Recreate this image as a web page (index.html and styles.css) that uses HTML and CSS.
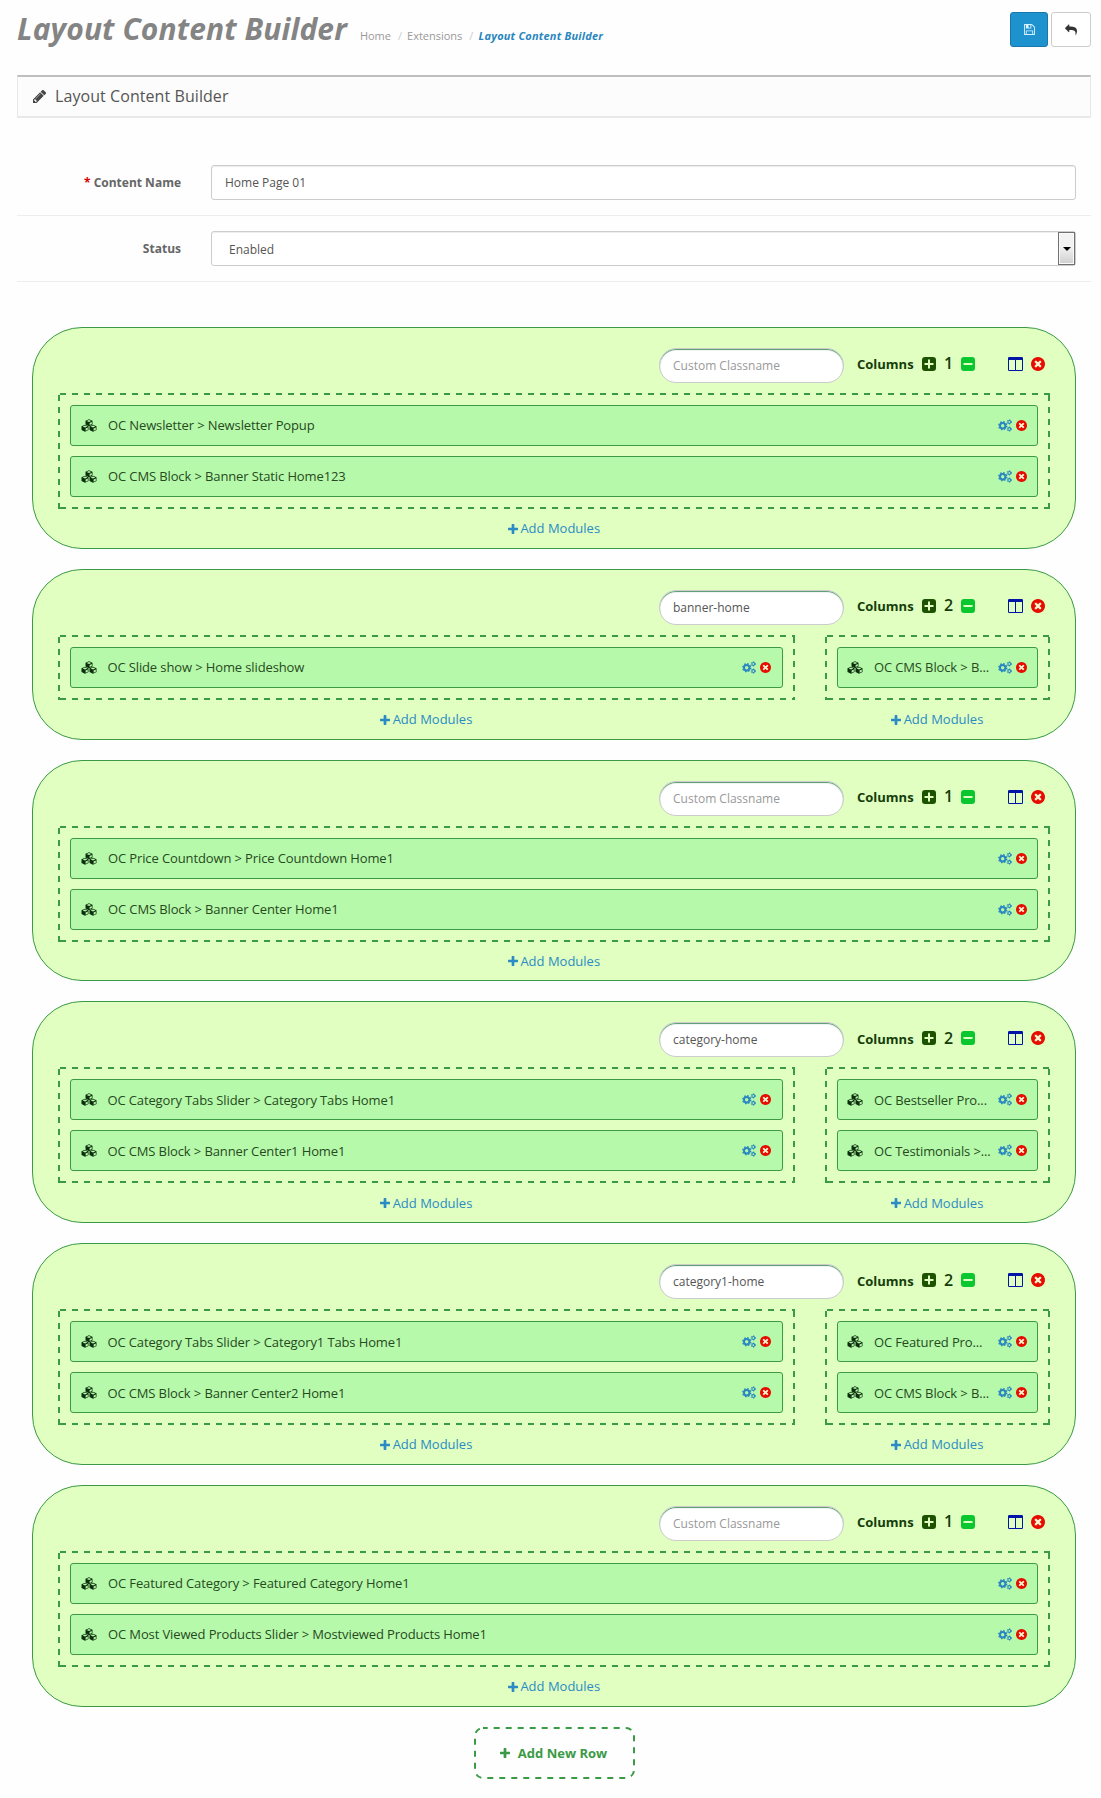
FILE: index.html
```
<!DOCTYPE html>
<html lang="en">
<head>
<meta charset="utf-8">
<title>Layout Content Builder</title>
<link rel="stylesheet" href="styles.css">
</head>
<body>
<svg class="sprite" aria-hidden="true">
  <symbol id="plus" viewBox="192 128 1408 1408"><path d="M1600 736v192q0 40-28 68t-68 28h-416v416q0 40-28 68t-68 28h-192q-40 0-68-28t-28-68v-416h-416q-40 0-68-28t-28-68v-192q0-40 28-68t68-28h416v-416q0-40 28-68t68-28h192q40 0 68 28t28 68v416h416q40 0 68 28t28 68z"/></symbol>
  <symbol id="reply" viewBox="0 0 1792 1792"><path d="M1792 1120q0 166-127 451-3 7-10.5 24t-13.5 30-13 22q-12 17-28 17-15 0-23.5-10t-8.5-25q0-9 2.5-26.5t2.5-23.5q5-68 5-123 0-101-17.5-181t-48.5-138.5-80-101-105.5-69.5-133-42.5-154-21.5-175.5-6h-224v256q0 26-19 45t-45 19-45-19l-512-512q-19-19-19-45t19-45l512-512q19-19 45-19t45 19 19 45v256h224q713 0 875 403 53 134 53 333z"/></symbol>
  <symbol id="save" viewBox="128 128 1536 1536"><path d="M512 1536h768v-384h-768v384zm896 0h128v-896q0-14-10-38.5t-20-34.5l-281-281q-10-10-34-20t-39-10v416q0 40-28 68t-68 28h-576q-40 0-68-28t-28-68v-416h-128v1280h128v-416q0-40 28-68t68-28h832q40 0 68 28t28 68v416zm-384-928v-320q0-13-9.5-22.5t-22.5-9.5h-192q-13 0-22.5 9.5t-9.5 22.5v320q0 13 9.5 22.5t22.5 9.5h192q13 0 22.5-9.5t9.5-22.5zm640 32v928q0 40-28 68t-68 28h-1344q-40 0-68-28t-28-68v-1344q0-40 28-68t68-28h928q40 0 88 20t76 48l280 280q28 28 48 76t20 88z"/></symbol>
  <symbol id="pencil" viewBox="128 149 1515 1515"><path d="M491 1536l91-91-235-235-91 91v107h128v128h107zm523-928q0-22-22-22-10 0-17 7l-542 542q-7 7-7 17 0 22 22 22 10 0 17-7l542-542q7-7 7-17zm-54-192l416 416-832 832h-416v-416zm683 96q0 53-37 90l-166 166-416-416 166-165q36-38 90-38 53 0 91 38l235 234q37 39 37 91z"/></symbol>
  <symbol id="remove" viewBox="128 128 1536 1536"><circle cx="896" cy="896" r="620" class="cross-bg"/><path d="M1277 1122q0-26-19-45l-181-181 181-181q19-19 19-45 0-27-19-46l-90-90q-19-19-46-19-26 0-45 19l-181 181-181-181q-19-19-45-19-27 0-46 19l-90 90q-19 19-19 46 0 26 19 45l181 181-181 181q-19 19-19 45 0 27 19 46l90 90q19 19 46 19 26 0 45-19l181-181 181 181q19 19 45 19 27 0 46-19l90-90q19-19 19-46zm387-226q0 209-103 385.5t-279.5 279.5-385.5 103-385.5-103-279.5-279.5-103-385.5 103-385.5 279.5-279.5 385.5-103 385.5 103 279.5 279.5 103 385.5z"/></symbol>
  <symbol id="plus-sq" viewBox="0 0 14 14"><path fill-rule="evenodd" d="M3 0h8a3 3 0 0 1 3 3v8a3 3 0 0 1-3 3H3a3 3 0 0 1-3-3V3a3 3 0 0 1 3-3zM6 2.5V6H2.5v2H6v3.500h2V8h3.500V6H8V2.500z"/></symbol>
  <symbol id="minus-sq" viewBox="0 0 14 14"><path fill-rule="evenodd" d="M3 0h8a3 3 0 0 1 3 3v8a3 3 0 0 1-3 3H3a3 3 0 0 1-3-3V3a3 3 0 0 1 3-3zM2.500 6v2h9V6z"/></symbol>
  <symbol id="columns" viewBox="0 0 15 14"><path fill-rule="evenodd" d="M1.300 0h12.400A1.300 1.300 0 0 1 15 1.300v11.400a1.300 1.300 0 0 1-1.300 1.300H1.300A1.300 1.300 0 0 1 0 12.700V1.300A1.300 1.300 0 0 1 1.300 0zM1 3v10h6V3zM8 3v10h6V3z"/></symbol>
  <symbol id="cubes" viewBox="0 0 16 13"><g id="cube"><path d="M8 .2l3.500 1.500v3.800L8 7.200 4.500 5.500V1.700z"/><path class="facet" d="M8 1l2.300 1L8 3 5.700 2zM8.600 4l2.200-1v2.100l-2.200 1z"/></g><use href="#cube" x="-4" y="5.600"/><use href="#cube" x="4" y="5.600"/></symbol>
  <symbol id="cogs" viewBox="0 0 14 13"><g fill="none" stroke="currentColor"><circle cx="4.700" cy="6.700" r="2.700" stroke-width="2"/><circle cx="4.700" cy="6.700" r="4" stroke-width="1.300" stroke-dasharray="1.640 1.500"/><circle cx="11.300" cy="2.900" r="1.450" stroke-width="1.100"/><circle cx="11.300" cy="2.900" r="2.250" stroke-width=".9" stroke-dasharray="1 1.360"/><circle cx="11.300" cy="10.100" r="1.450" stroke-width="1.100"/><circle cx="11.300" cy="10.100" r="2.250" stroke-width=".9" stroke-dasharray="1 1.360"/></g></symbol>
</svg>

<header class="page-header">
  <h1>Layout Content Builder</h1>
  <ul class="breadcrumb"><li>Home</li><li>Extensions</li><li class="active">Layout Content Builder</li></ul>
  <div class="actions">
    <button class="btn btn-primary"><svg class="i-save"><use href="#save"/></svg></button>
    <button class="btn btn-default"><svg class="i-reply"><use href="#reply"/></svg></button>
  </div>
</header>

<div class="panel-heading"><svg class="i-pencil"><use href="#pencil"/></svg><h3>Layout Content Builder</h3></div>

<form class="settings">
  <div class="form-group"><label><span class="required">*</span> Content Name</label><div class="control">Home Page 01</div></div>
  <div class="form-group"><label>Status</label><div class="control select"><span>Enabled</span><i class="drop"></i></div></div>
</form>

<main class="rows">
  <section class="card">
    <div class="tools"><div class="classname empty">Custom Classname</div><b>Columns</b><svg class="i-plus"><use href="#plus-sq"/></svg><span class="count">1</span><svg class="i-minus"><use href="#minus-sq"/></svg><svg class="i-cols"><use href="#columns"/></svg><svg class="i-del"><use href="#remove"/></svg></div>
    <div class="cols">
      <div class="col"><div class="drop-zone">
        <div class="module"><svg class="i-cubes"><use href="#cubes"/></svg><span>OC Newsletter &gt; Newsletter Popup</span><svg class="i-cogs"><use href="#cogs"/></svg><svg class="i-x"><use href="#remove"/></svg></div>
        <div class="module"><svg class="i-cubes"><use href="#cubes"/></svg><span>OC CMS Block &gt; Banner Static Home123</span><svg class="i-cogs"><use href="#cogs"/></svg><svg class="i-x"><use href="#remove"/></svg></div>
      </div><a class="add"><svg><use href="#plus"/></svg>Add Modules</a></div>
    </div>
  </section>

  <section class="card">
    <div class="tools"><div class="classname">banner-home</div><b>Columns</b><svg class="i-plus"><use href="#plus-sq"/></svg><span class="count">2</span><svg class="i-minus"><use href="#minus-sq"/></svg><svg class="i-cols"><use href="#columns"/></svg><svg class="i-del"><use href="#remove"/></svg></div>
    <div class="cols split">
      <div class="col"><div class="drop-zone">
        <div class="module"><svg class="i-cubes"><use href="#cubes"/></svg><span>OC Slide show &gt; Home slideshow</span><svg class="i-cogs"><use href="#cogs"/></svg><svg class="i-x"><use href="#remove"/></svg></div>
      </div><a class="add"><svg><use href="#plus"/></svg>Add Modules</a></div>
      <div class="col"><div class="drop-zone">
        <div class="module"><svg class="i-cubes"><use href="#cubes"/></svg><span>OC CMS Block &gt; B...</span><svg class="i-cogs"><use href="#cogs"/></svg><svg class="i-x"><use href="#remove"/></svg></div>
      </div><a class="add"><svg><use href="#plus"/></svg>Add Modules</a></div>
    </div>
  </section>

  <section class="card">
    <div class="tools"><div class="classname empty">Custom Classname</div><b>Columns</b><svg class="i-plus"><use href="#plus-sq"/></svg><span class="count">1</span><svg class="i-minus"><use href="#minus-sq"/></svg><svg class="i-cols"><use href="#columns"/></svg><svg class="i-del"><use href="#remove"/></svg></div>
    <div class="cols">
      <div class="col"><div class="drop-zone">
        <div class="module"><svg class="i-cubes"><use href="#cubes"/></svg><span>OC Price Countdown &gt; Price Countdown Home1</span><svg class="i-cogs"><use href="#cogs"/></svg><svg class="i-x"><use href="#remove"/></svg></div>
        <div class="module"><svg class="i-cubes"><use href="#cubes"/></svg><span>OC CMS Block &gt; Banner Center Home1</span><svg class="i-cogs"><use href="#cogs"/></svg><svg class="i-x"><use href="#remove"/></svg></div>
      </div><a class="add"><svg><use href="#plus"/></svg>Add Modules</a></div>
    </div>
  </section>

  <section class="card">
    <div class="tools"><div class="classname">category-home</div><b>Columns</b><svg class="i-plus"><use href="#plus-sq"/></svg><span class="count">2</span><svg class="i-minus"><use href="#minus-sq"/></svg><svg class="i-cols"><use href="#columns"/></svg><svg class="i-del"><use href="#remove"/></svg></div>
    <div class="cols split">
      <div class="col"><div class="drop-zone">
        <div class="module"><svg class="i-cubes"><use href="#cubes"/></svg><span>OC Category Tabs Slider &gt; Category Tabs Home1</span><svg class="i-cogs"><use href="#cogs"/></svg><svg class="i-x"><use href="#remove"/></svg></div>
        <div class="module"><svg class="i-cubes"><use href="#cubes"/></svg><span>OC CMS Block &gt; Banner Center1 Home1</span><svg class="i-cogs"><use href="#cogs"/></svg><svg class="i-x"><use href="#remove"/></svg></div>
      </div><a class="add"><svg><use href="#plus"/></svg>Add Modules</a></div>
      <div class="col"><div class="drop-zone">
        <div class="module"><svg class="i-cubes"><use href="#cubes"/></svg><span>OC Bestseller Pro...</span><svg class="i-cogs"><use href="#cogs"/></svg><svg class="i-x"><use href="#remove"/></svg></div>
        <div class="module"><svg class="i-cubes"><use href="#cubes"/></svg><span>OC Testimonials &gt;...</span><svg class="i-cogs"><use href="#cogs"/></svg><svg class="i-x"><use href="#remove"/></svg></div>
      </div><a class="add"><svg><use href="#plus"/></svg>Add Modules</a></div>
    </div>
  </section>

  <section class="card">
    <div class="tools"><div class="classname">category1-home</div><b>Columns</b><svg class="i-plus"><use href="#plus-sq"/></svg><span class="count">2</span><svg class="i-minus"><use href="#minus-sq"/></svg><svg class="i-cols"><use href="#columns"/></svg><svg class="i-del"><use href="#remove"/></svg></div>
    <div class="cols split">
      <div class="col"><div class="drop-zone">
        <div class="module"><svg class="i-cubes"><use href="#cubes"/></svg><span>OC Category Tabs Slider &gt; Category1 Tabs Home1</span><svg class="i-cogs"><use href="#cogs"/></svg><svg class="i-x"><use href="#remove"/></svg></div>
        <div class="module"><svg class="i-cubes"><use href="#cubes"/></svg><span>OC CMS Block &gt; Banner Center2 Home1</span><svg class="i-cogs"><use href="#cogs"/></svg><svg class="i-x"><use href="#remove"/></svg></div>
      </div><a class="add"><svg><use href="#plus"/></svg>Add Modules</a></div>
      <div class="col"><div class="drop-zone">
        <div class="module"><svg class="i-cubes"><use href="#cubes"/></svg><span>OC Featured Pro...</span><svg class="i-cogs"><use href="#cogs"/></svg><svg class="i-x"><use href="#remove"/></svg></div>
        <div class="module"><svg class="i-cubes"><use href="#cubes"/></svg><span>OC CMS Block &gt; B...</span><svg class="i-cogs"><use href="#cogs"/></svg><svg class="i-x"><use href="#remove"/></svg></div>
      </div><a class="add"><svg><use href="#plus"/></svg>Add Modules</a></div>
    </div>
  </section>

  <section class="card">
    <div class="tools"><div class="classname empty">Custom Classname</div><b>Columns</b><svg class="i-plus"><use href="#plus-sq"/></svg><span class="count">1</span><svg class="i-minus"><use href="#minus-sq"/></svg><svg class="i-cols"><use href="#columns"/></svg><svg class="i-del"><use href="#remove"/></svg></div>
    <div class="cols">
      <div class="col"><div class="drop-zone">
        <div class="module"><svg class="i-cubes"><use href="#cubes"/></svg><span>OC Featured Category &gt; Featured Category Home1</span><svg class="i-cogs"><use href="#cogs"/></svg><svg class="i-x"><use href="#remove"/></svg></div>
        <div class="module"><svg class="i-cubes"><use href="#cubes"/></svg><span>OC Most Viewed Products Slider &gt; Mostviewed Products Home1</span><svg class="i-cogs"><use href="#cogs"/></svg><svg class="i-x"><use href="#remove"/></svg></div>
      </div><a class="add"><svg><use href="#plus"/></svg>Add Modules</a></div>
    </div>
  </section>
</main>

<button class="add-row"><svg class="outline"><rect x="1" y="1" width="159" height="50" rx="8"/></svg><svg class="i-add"><use href="#plus"/></svg>Add New Row</button>
</body>
</html>
```
FILE: styles.css
```
* { box-sizing: border-box; }
body {
  margin: 0;
  padding: 0 10px 0 17px;
  height: 1798px;
  overflow: hidden;
  background: #fefefe;
  font: 12px/17px "Open Sans", sans-serif;
  color: #555;
}
svg { display: block; flex: none; fill: currentColor; }
.sprite { display: none; }

.page-header { display: flex; align-items: flex-start; height: 75px; }
h1 { margin: 9px 0 0; font-size: 30px; line-height: 40px; font-weight: 700; font-style: italic; letter-spacing: .1px; color: #848484; white-space: nowrap; }
.breadcrumb { display: flex; margin: 27px 0 0 13px; padding: 0; list-style: none; font-size: 11px; color: #999; white-space: nowrap; }
.breadcrumb li + li::before { content: "/"; padding: 0 5px 0 7px; color: #ccc; font-weight: 400; font-style: normal; }
.breadcrumb .active { color: #2a86c0; font-weight: 700; font-style: italic; letter-spacing: .2px; }
.actions { display: flex; gap: 3px; margin: 12px 0 0 auto; }
.btn { display: flex; align-items: center; justify-content: center; height: 35px; padding: 0; border: 1px solid #ccc; border-radius: 3px; background: #fff; color: #333; }
.btn-primary { width: 38px; border-color: #1978ab; background: #1e91cf; color: #d9f2ff; }
.btn-default { width: 40px; }
.i-save { width: 11px; height: 11px; }
.i-reply { width: 12px; height: 12px; }

.panel-heading { display: flex; align-items: center; height: 43px; padding: 0 13px 0 15px; border: solid #e8e8e8; border-width: 2px 1px; border-top-color: #bfbfbf; background: #fcfcfc; }
.i-pencil { width: 13px; height: 13px; color: #444; }
.panel-heading h3 { margin: 0 0 2px 9px; font-size: 16px; line-height: 20px; font-weight: 400; letter-spacing: .07px; color: #555; }

.settings { margin-top: 32px; }
.form-group { display: flex; align-items: center; height: 66px; padding: 0 15px 0 0; border-bottom: 1px solid #ededed; }
.form-group label { width: 164px; margin-right: 30px; text-align: right; font-weight: 700; color: #666; }
.required { color: #d00; }
.control { flex: 1; height: 35px; padding: 8px 13px; border: 1px solid #ccc; border-radius: 3px; background: #fff; box-shadow: inset 0 1px 1px rgba(0,0,0,.075); }
.select { display: flex; justify-content: space-between; padding: 0; }
.select span { padding: 9px 17px; }
.drop { display: flex; align-items: center; justify-content: center; width: 17px; border: 1px solid #707070; background: linear-gradient(#f2f2f2 45%, #cfcfcf); box-shadow: inset 0 0 0 1px #fafafa; }
.drop::after { content: ""; border: 4px solid transparent; border-top-color: #000; border-bottom: 0; }

.rows { display: grid; gap: 20px; padding: 45px 15px 0; }
.card { padding: 20px 25px 0; border: 1px solid #3a9a45; border-radius: 50px; background: #e0ffc0; }
.tools { display: flex; justify-content: flex-end; height: 45px; padding-right: 5px; color: #143d0b; }
.classname { width: 185px; height: 35px; margin-right: 13px; padding: 8px 13px; border: 1px solid #ccc; border-radius: 17px; background: #fff; color: #555; box-shadow: inset 0 1px 1px #53966c; }
.classname.empty { color: #999; }
.tools b { width: 65px; padding-top: 8.400px; font-size: 13px; }
.tools svg { width: 14px; height: 14px; margin-top: 9px; }
.i-plus { color: #1c5200; }
.count { width: 25px; padding-top: 7.400px; text-align: center; font-size: 16px; font-weight: 600; }
.i-minus { color: #0ac62f; }
.tools .i-cols { width: 15px; margin: 9px 8px 0 33px; color: #0014a8; }
.i-del, .i-x { color: #e60d00; }
.cross-bg { fill: #fff3d0; }

.cols { display: grid; grid-template-columns: 1fr; gap: 30px; }
.cols.split { grid-template-columns: 736.500px 1fr; }
/* Long dashes on all four edges: 6px on, 6px off */
.drop-zone {
  --dash: transparent 0 2px, #3a9a45 2px 8px, transparent 8px 12px;
  display: grid;
  gap: 10px;
  padding: 12px;
  background:
    repeating-linear-gradient(90deg, var(--dash)) 0 0 / 100% 2px no-repeat,
    repeating-linear-gradient(90deg, var(--dash)) 0 100% / 100% 2px no-repeat,
    repeating-linear-gradient(180deg, var(--dash)) 0 0 / 2px 100% no-repeat,
    repeating-linear-gradient(180deg, var(--dash)) 100% 0 / 2px 100% no-repeat;
}
.module { display: flex; align-items: center; height: 41px; padding: 0 10px; border: 1px solid #3a9a45; border-radius: 3px; background: #b7f9ab; color: #264a20; font-size: 13px; letter-spacing: -.12px; white-space: nowrap; }
.module span { flex: 1; margin: .800px 0 0 11px; }
.split .module { padding: 0 10.200px 0 9.800px; }
.split .module span { margin-left: 10.600px; }
.i-cubes { width: 16px; height: 13px; color: #0c2e0c; }
.facet { fill: #b7f9ab; }
.i-cogs { width: 14px; height: 13px; color: #2a86c0; }
.i-x { width: 11px; height: 11px; margin-left: 4px; }
.add { display: flex; align-items: center; justify-content: center; height: 38.800px; gap: 2.500px; padding-top: .800px; font-size: 13px; color: #2c8bc4; }
.add svg { width: 10px; height: 10px; }

.add-row { position: relative; display: flex; align-items: center; justify-content: center; gap: 8px; width: 161px; height: 52px; margin: 20px auto 0 457px; padding: 0 2px 0 0; border: 0; background: none; font: 700 13px/18px "Open Sans", sans-serif; color: #3a9a45; }
.i-add { width: 10px; height: 10px; }
.outline { position: absolute; inset: 0; width: 161px; height: 52px; fill: none; stroke: #3a9a45; stroke-width: 2; stroke-dasharray: 6 6; stroke-dashoffset: 1.300; }
```
